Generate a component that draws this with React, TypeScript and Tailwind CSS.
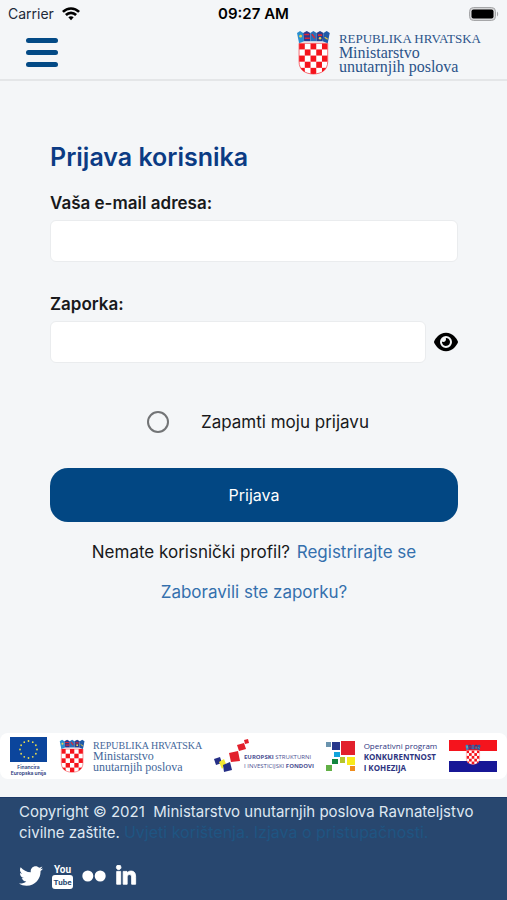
import { useState } from "react";
import { FaEye, FaLinkedinIn, FaTwitter } from "react-icons/fa6";

const checkers = Array.from({ length: 25 }, (_, i) => i).filter((i) => i % 2 === 0);

function CoatOfArms({ className }: { className?: string }) {
  return (
    <svg viewBox="0 0 34 44" className={className} aria-hidden="true">
      <path d="M3 13H31V31C31 39 25 43 17 43S3 39 3 31Z" fill="#fff" />
      <clipPath id="shield">
        <path d="M3 13H31V31C31 39 25 43 17 43S3 39 3 31Z" />
      </clipPath>
      <g clipPath="url(#shield)" fill="#f5141d">
        {checkers.map((i) => (
          <rect key={i} x={3 + (i % 5) * 5.6} y={13 + Math.floor(i / 5) * 6} width="5.6" height="6" />
        ))}
      </g>
      <path d="M3 13H31V31C31 39 25 43 17 43S3 39 3 31Z" fill="none" stroke="#f5141d" strokeWidth=".6" />
      <path d="M1 3L4 1L7 3L8 11L3 13Z" fill="#2a8fd0" />
      <path d="M7 3L10.5 1L14 3L14 11L8 11Z" fill="#2b3990" />
      <path d="M14 3L17 1L20 3L20 11H14Z" fill="#2a70b8" />
      <path d="M20 3L23.5 1L27 3L26 11H20Z" fill="#26418f" />
      <path d="M27 3L30 1L33 3L31 13L26 11Z" fill="#1f5aa8" />
      <path d="M8 4.5H13M8.5 8H13.5" stroke="#d62839" strokeWidth="1.5" />
      <path d="M15.5 4L18.5 8M21.5 5H25.5" stroke="#d62839" strokeWidth="1.5" />
      <circle cx="4.5" cy="6" r="1.3" fill="#f0d24a" />
      <circle cx="23.5" cy="8" r="1.2" fill="#f0d24a" />
      <path d="M28 7L31 9" stroke="#e8c840" strokeWidth="1.2" />
    </svg>
  );
}

function CroatianFlag({ className }: { className?: string }) {
  return (
    <svg viewBox="0 0 48 32" className={className} role="img" aria-label="Hrvatska">
      <path d="M0 0H48V11H0Z" fill="#f5141d" />
      <path d="M0 11H48V21H0Z" fill="#fff" />
      <path d="M0 21H48V32H0Z" fill="#171796" />
      <svg x="16" y="4" width="16" height="21">
        <CoatOfArms />
      </svg>
    </svg>
  );
}

function EuFlag() {
  return (
    <svg viewBox="0 0 37 25" className="w-full" role="img" aria-label="Europska unija">
      <path d="M0 0H37V25H0Z" fill="#0b459c" />
      {Array.from({ length: 12 }, (_, i) => (
        <circle
          key={i}
          cx={18.5 + 8.5 * Math.sin((i * Math.PI) / 6)}
          cy={12.5 - 8.5 * Math.cos((i * Math.PI) / 6)}
          r=".9"
          fill="#e8dc50"
        />
      ))}
    </svg>
  );
}

function FundsMark() {
  return (
    <svg viewBox="0 0 36 34" className="w-9 shrink-0" aria-hidden="true">
      <path d="M30 1L34 0L35 4L31 5Z" fill="#e2202c" />
      <path d="M23 6L30 4L32 10L25 12Z" fill="#e2202c" />
      <path d="M15 14L24 12L26 22L17 23Z" fill="#e2202c" />
      <path d="M0 20L6 18L8 24L2 26Z" fill="#252f86" />
      <path d="M5 23L10 20L12 25L8 30Z" fill="#f4e733" />
      <path d="M9 26L16 23L18 31L10 33Z" fill="#252f86" />
    </svg>
  );
}

function ProgramMark() {
  return (
    <svg viewBox="0 0 30 30" className="w-[30px] shrink-0" aria-hidden="true">
      <path d="M0 1H5V6H0Z" fill="#6b94ae" />
      <path d="M6 1H14V9H6Z" fill="#27388c" />
      <path d="M15 0H29V14H15Z" fill="#e2202c" />
      <path d="M8 11H14V16H8Z" fill="#12a5dc" />
      <path d="M6 18H12V23H6Z" fill="#12863f" />
      <path d="M14 16H19V22H14Z" fill="#b4c52c" />
      <path d="M21 16H29V24H21Z" fill="#f8ea1c" />
      <path d="M0 24H6V30H0Z" fill="#62b046" />
      <path d="M24 25H29V30H24Z" fill="#f08c1c" />
    </svg>
  );
}

function YouTubeIcon() {
  return (
    <svg
      viewBox="0 0 21 26"
      className="w-[21px] font-['Roboto',sans-serif]"
      textAnchor="middle"
      fontWeight="700"
      aria-hidden="true"
    >
      <text x="10.5" y="10" fontSize="10" fill="#fff">
        You
      </text>
      <rect x="0" y="12" width="21" height="14" rx="3" fill="#fff" />
      <text x="10.5" y="22" fontSize="8" fill="#28476f">
        Tube
      </text>
    </svg>
  );
}

function StatusBar() {
  return (
    <div className="grid grid-cols-3 items-center px-2 pt-1 text-sm leading-5">
      <div className="flex items-center gap-2 text-gray-800">
        Carrier
        <svg viewBox="0 0 18 14" className="w-[18px]" fill="none" stroke="#000" strokeWidth="2.6" aria-hidden="true">
          <path d="M.9 4.9C5.5 .3 12.5 .3 17.1 4.9" />
          <path d="M3.9 8C6.8 5.100 11.2 5.100 14.100 8" />
          <path d="M6.3 10.3C7.9 8.8 10.1 8.8 11.7 10.3L9 13.2Z" fill="#000" stroke="none" />
        </svg>
      </div>
      <div className="text-center text-[15px] font-semibold text-black">09:27 AM</div>
      <svg viewBox="0 0 30 14" className="h-3.5 justify-self-end" aria-hidden="true">
        <rect x=".5" y=".5" width="26" height="13" rx="4" fill="#d4d5d6" stroke="#a5a6a8" />
        <rect x="2.5" y="2.5" width="22" height="9" rx="2" fill="#000" />
        <path d="M28 4.5C29.6 5.5 29.6 8.5 28 9.5Z" fill="#a5a6a8" />
      </svg>
    </div>
  );
}

export default function App() {
  const [showPassword, setShowPassword] = useState(false);

  return (
    <div className="flex min-h-screen flex-col bg-[#f4f6f8] font-['Inter',sans-serif] text-[#18191b]">
      <StatusBar />

      <header className="flex items-center justify-between border-b-2 border-[#e4e6e8] px-[26px] pt-1.5 pb-1">
        <button type="button" aria-label="Izbornik" className="flex w-8 flex-col gap-[7px]">
          <span className="h-[5px] rounded-full bg-[#034a86]" />
          <span className="h-[5px] rounded-full bg-[#034a86]" />
          <span className="h-[5px] rounded-full bg-[#034a86]" />
        </button>
        <a href="#" className="flex items-center gap-2 font-['Liberation_Serif',serif] text-[#2b5389]">
          <CoatOfArms className="h-[45px] shrink-0" />
          <div className="text-base leading-[14px]">
            <div className="text-[13px] leading-[14px]">REPUBLIKA HRVATSKA</div>
            <div>Ministarstvo</div>
            <div>unutarnjih poslova</div>
          </div>
        </a>
      </header>

      <main className="flex flex-col pt-[60px] pr-[49px] pl-[50px]">
        <h1 className="text-[25px] leading-8 font-semibold text-[#0b3b84]">Prijava korisnika</h1>
        <form className="flex flex-col" onSubmit={(e) => e.preventDefault()}>
          <label htmlFor="email" className="mt-[18px] mb-[5px] text-[17px] leading-6 font-semibold">
            Vaša e-mail adresa:
          </label>
          <input id="email" type="email" className="h-[42px] rounded-md border border-[#eaecee] bg-white px-3" />

          <label htmlFor="password" className="mt-[30px] mb-[5px] text-[17px] leading-6 font-semibold">
            Zaporka:
          </label>
          <div className="flex items-center gap-2">
            <input
              id="password"
              type={showPassword ? "text" : "password"}
              className="h-[42px] min-w-0 flex-1 rounded-md border border-[#eaecee] bg-white px-3"
            />
            <button type="button" aria-label="Prikaži zaporku" onClick={() => setShowPassword(!showPassword)}>
              <FaEye className="size-6 text-black" />
            </button>
          </div>

          <label className="mt-[47px] flex items-center justify-center gap-8 pl-2 text-[17px] leading-6">
            <input
              type="checkbox"
              className="size-[22px] appearance-none rounded-full border-2 border-[#727476] checked:bg-[#034a86]"
            />
            Zapamti moju prijavu
          </label>

          <button type="submit" className="mt-[34px] h-[54px] rounded-[18px] bg-[#024783] text-base text-white">
            Prijava
          </button>
        </form>

        <p className="mt-[18px] text-center text-[17px] leading-6">
          Nemate korisnički profil?{" "}
          <a href="#" className="ml-0.5 text-[#3470ad]">
            Registrirajte se
          </a>
        </p>
        <a href="#" className="mt-4 self-center text-[17px] leading-6 text-[#3470ad]">
          Zaboravili ste zaporku?
        </a>
      </main>

      <section className="mt-auto mb-[18px] flex h-[46px] items-center justify-between rounded-lg bg-white px-[10px]">
        <div className="w-[37px] text-center text-[5px] leading-[6px] font-semibold text-[#27387a]">
          <EuFlag />
          <div className="pt-0.5">Financira</div>
          <div className="whitespace-nowrap">Europska unija</div>
        </div>
        <div className="flex items-center gap-2 font-['Liberation_Serif',serif] text-[#44679a]">
          <CoatOfArms className="h-[34px] shrink-0" />
          <div className="text-[12px] leading-[11px] whitespace-nowrap">
            <div className="text-[10px] leading-[11px]">REPUBLIKA HRVATSKA</div>
            <div>Ministarstvo</div>
            <div>unutarnjih poslova</div>
          </div>
        </div>
        <div className="flex items-center font-['Open_Sans',sans-serif] text-[6px] leading-[9px] whitespace-nowrap text-[#4b4f92]">
          <FundsMark />
          <div className="-ml-1.5 pt-3">
            <div>
              <b>EUROPSKI</b> STRUKTURNI
            </div>
            <div>
              I INVESTICIJSKI <b>FONDOVI</b>
            </div>
          </div>
        </div>
        <div className="flex items-center gap-2 font-['Open_Sans',sans-serif] text-[8px] leading-[11px] whitespace-nowrap text-[#2d3480]">
          <ProgramMark />
          <div>
            <div>Operativni program</div>
            <div className="font-bold">KONKURENTNOST</div>
            <div className="font-bold">I KOHEZIJA</div>
          </div>
        </div>
        <CroatianFlag className="w-12 shrink-0" />
      </section>

      <footer className="border-t border-[#1c3a68] bg-[#28476f] px-[19px] pt-1 pb-[11px] text-[15px] leading-5 text-[#dfe8f2]">
        <p>
          Copyright © 2021 &nbsp;Ministarstvo unutarnjih poslova Ravnateljstvo civilne zaštite.{" "}
          <a href="#" className="text-base leading-5 text-[#1f5582]">
            Uvjeti korištenja.
          </a>{" "}
          <a href="#" className="text-base leading-5 text-[#1f5582]">
            Izjava o pristupačnosti.
          </a>
        </p>
        <div className="mt-5 flex items-center gap-[9px] text-white">
          <a href="#" aria-label="Twitter">
            <FaTwitter className="size-6" />
          </a>
          <a href="#" aria-label="YouTube">
            <YouTubeIcon />
          </a>
          <a href="#" aria-label="Flickr">
            <svg viewBox="0 0 24 12" className="w-6" fill="#fff" aria-hidden="true">
              <circle cx="5.8" cy="6" r="5.5" />
              <circle cx="18.2" cy="6" r="5.5" />
            </svg>
          </a>
          <a href="#" aria-label="LinkedIn">
            <FaLinkedinIn className="size-[22px]" stroke="currentColor" strokeWidth="20" />
          </a>
        </div>
      </footer>
    </div>
  );
}
